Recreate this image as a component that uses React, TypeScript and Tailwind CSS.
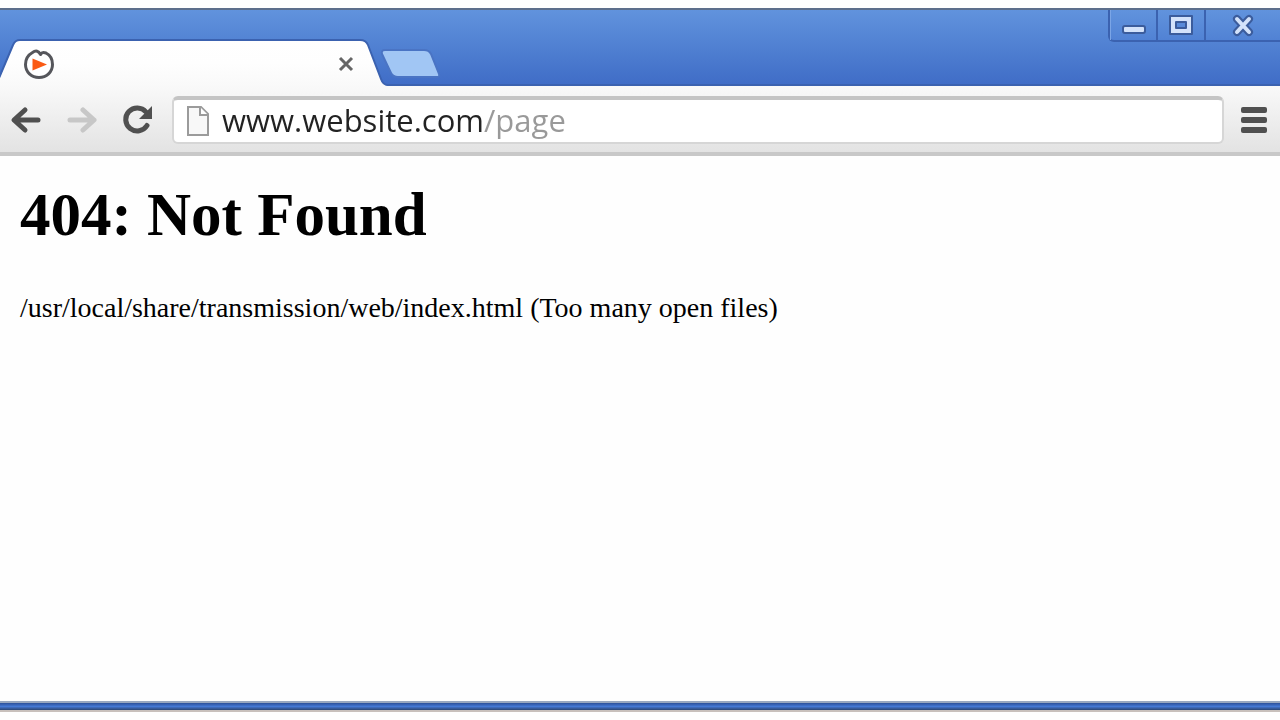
import React, { useState } from "react";

function TabShape() {
  return (
    <svg
      className="absolute inset-0 h-full w-full"
      viewBox="0 0 392 48"
      preserveAspectRatio="none"
      aria-hidden="true"
    >
      <defs>
        <linearGradient id="tabFill" x1="0" y1="0" x2="0" y2="1">
          <stop offset="0" stopColor="#ffffff" />
          <stop offset="0.5" stopColor="#fefefe" />
          <stop offset="1" stopColor="#f9f9f9" />
        </linearGradient>
      </defs>
      <path
        d="M0 48V39L13 7Q15 2 20 2H360Q366 2 368 7L381 41Q383 47 388 48Z"
        fill="url(#tabFill)"
      />
      <path
        d="M-1 40L13 7Q15 2 20 2H360Q366 2 368 7L381 41Q383 47 388 47H392"
        fill="none"
        stroke="#3b62b0"
        strokeWidth="2"
      />
    </svg>
  );
}

function SiteIcon() {
  return (
    <svg className="h-8 w-8" viewBox="0 0 32 32" aria-hidden="true">
      <path
        d="M9.500 4.500C5 7 2.500 11 2.500 16.500C2.500 24 8.500 29.500 16 29.500S29.500 24 29.500 16.500C29.500 11 27 7 23 5C20.500 4 18.500 4.500 17.500 6.500C15.500 3 13 2 9.500 4.500Z"
        fill="#fff"
        stroke="#55565b"
        strokeWidth="3"
        strokeLinejoin="round"
      />
      <path d="M9.500 10.500L24 16.500L9.500 22.500Z" fill="#fa5a14" />
    </svg>
  );
}

function ArrowIcon() {
  return (
    <svg className="h-8 w-8" viewBox="0 0 32 32" fill="none" aria-hidden="true">
      <path
        d="M28 16H5M15 6L4 16L15 26"
        stroke="currentColor"
        strokeWidth="5"
        strokeLinecap="round"
        strokeLinejoin="round"
      />
    </svg>
  );
}

function ReloadIcon() {
  return (
    <svg className="h-8 w-8" viewBox="0 0 32 32" fill="none" aria-hidden="true">
      <path
        d="M25 21.500A11.500 11.500 0 1 1 24 8"
        stroke="currentColor"
        strokeWidth="5"
        strokeLinecap="round"
      />
      <path d="M30 2V15H17Z" fill="currentColor" />
    </svg>
  );
}

function PageIcon() {
  return (
    <svg className="h-8 w-6 shrink-0" viewBox="0 0 24 32" aria-hidden="true">
      <path
        d="M2 2H15L22 9V30H2Z"
        fill="#f8f8f8"
        stroke="#9b9b9b"
        strokeWidth="2"
      />
      <path d="M14 2V10H22" fill="#fff" stroke="#9b9b9b" strokeWidth="2" />
    </svg>
  );
}

function WindowControls() {
  return (
    <div className="flex h-8 rounded-bl-md border-b-2 border-l-2 border-[#3b62b0] bg-linear-to-b from-[#6193dd] to-[#5182d4] text-[#d3e2fa]">
      <button
        aria-label="Minimize"
        className="flex w-[46px] items-center justify-center border-l border-[#7ba5e6]"
      >
        <svg className="h-8 w-8" viewBox="0 0 32 32" aria-hidden="true">
          <rect x="5" y="17" width="22" height="7" rx="2" fill="currentColor" stroke="#3b5c9c" strokeWidth="2" />
        </svg>
      </button>
      <button
        aria-label="Maximize"
        className="flex w-12 items-center justify-center border-l-2 border-[#3b62b0]"
      >
        <svg className="h-8 w-8" viewBox="0 0 32 32" aria-hidden="true">
          <path
            d="M5 7H27V25H5ZM11 13V19H21V13Z"
            fill="currentColor"
            fillRule="evenodd"
            stroke="#3b5c9c"
            strokeWidth="2"
            strokeLinejoin="round"
          />
        </svg>
      </button>
      <button
        aria-label="Close window"
        className="flex w-[76px] items-center justify-center border-l-2 border-[#3b62b0]"
      >
        <svg className="h-8 w-8" viewBox="0 0 32 32" fill="none" strokeLinecap="round" aria-hidden="true">
          <path d="M10 10L22 23M22 10L10 23" stroke="#3b5c9c" strokeWidth="8" />
          <path d="M10 10L22 23M22 10L10 23" stroke="currentColor" strokeWidth="4" />
        </svg>
      </button>
    </div>
  );
}

function TitleBar() {
  return (
    <header className="flex h-[78px] items-end border-t-2 border-[#5c6e8b] bg-linear-to-b from-[#6193dd] to-[#3f6cc6]">
      <div className="relative h-12 w-[392px]">
        <TabShape />
        <div className="relative flex h-full items-center justify-between pt-1 pr-8 pl-[23px]">
          <SiteIcon />
          <button aria-label="Close tab" className="flex h-7 w-7 items-center justify-center">
            <svg className="h-4 w-4" viewBox="0 0 16 16" aria-hidden="true">
              <path d="M2 2L14 14M14 2L2 14" stroke="#666" strokeWidth="3" />
            </svg>
          </button>
        </div>
      </div>
      <div className="flex h-full flex-1 items-end justify-between border-b-2 border-[#3b62b0]">
        <button aria-label="New tab" className="-ml-3 pb-1">
          <svg className="h-8 w-[62px]" viewBox="0 0 62 32" aria-hidden="true">
            <path
              d="M5 2H44Q49 2 51 6L59 26Q60 29 57 29H18Q13 29 11 25L2 6Q1 2 5 2Z"
              fill="#a1c6f4"
              stroke="#4a74c4"
              strokeWidth="2"
            />
          </svg>
        </button>
        <div className="self-start">
          <WindowControls />
        </div>
      </div>
    </header>
  );
}

function Toolbar() {
  const [address, setAddress] = useState("www.website.com/page");

  return (
    <nav className="flex h-[70px] items-center border-b-4 border-[#c8c8c8] bg-linear-to-b from-[#f9f9f9] to-[#e3e3e3] pt-px pr-3 pl-[10px] text-[#505050]">
      <button aria-label="Back">
        <ArrowIcon />
      </button>
      <button aria-label="Forward" className="ml-6 rotate-180 text-[#c7c7c7]">
        <ArrowIcon />
      </button>
      <button aria-label="Reload" className="ml-6">
        <ReloadIcon />
      </button>
      <div className="mr-4 ml-[18px] flex h-12 min-w-0 flex-1 items-center gap-3 rounded-md border-2 border-t-4 border-[#d6d6d6] border-t-[#c4c4c4] bg-white px-3">
        <PageIcon />
        <input
          type="text"
          aria-label="Address"
          value={address}
          onChange={(e) => setAddress(e.target.value)}
          className="h-10 min-w-0 flex-1 bg-linear-to-r from-[#222] from-[262px] to-[#999] to-[262px] bg-clip-text font-['Open_Sans','Noto_Sans',sans-serif] text-[31px] text-transparent outline-none"
        />
      </div>
      <button aria-label="Menu">
        <svg className="h-7 w-7" viewBox="0 0 28 28" fill="currentColor" aria-hidden="true">
          <rect x="1" y="1" width="26" height="6" rx="2" />
          <rect x="1" y="11" width="26" height="6" rx="2" />
          <rect x="1" y="21" width="26" height="6" rx="2" />
        </svg>
      </button>
    </nav>
  );
}

export default function App() {
  return (
    <div className="flex min-h-screen flex-col bg-[#fefefe] py-2">
      <TitleBar />
      <Toolbar />
      <main className="flex-1 px-5 pt-6 font-['Liberation_Serif',serif] text-black">
        <h1 className="text-[61px] leading-[70px] font-bold">404: Not Found</h1>
        <p className="mt-[42px] text-[28px] leading-8">
          /usr/local/share/transmission/web/index.html (Too many open files)
        </p>
      </main>
      <footer className="h-[11px] border-t-2 border-b-2 border-t-[#98a7bf] border-b-[#c8c0bc] bg-linear-to-b from-[#2c509a] via-[#4478d4] to-[#2c4674]" />
    </div>
  );
}
